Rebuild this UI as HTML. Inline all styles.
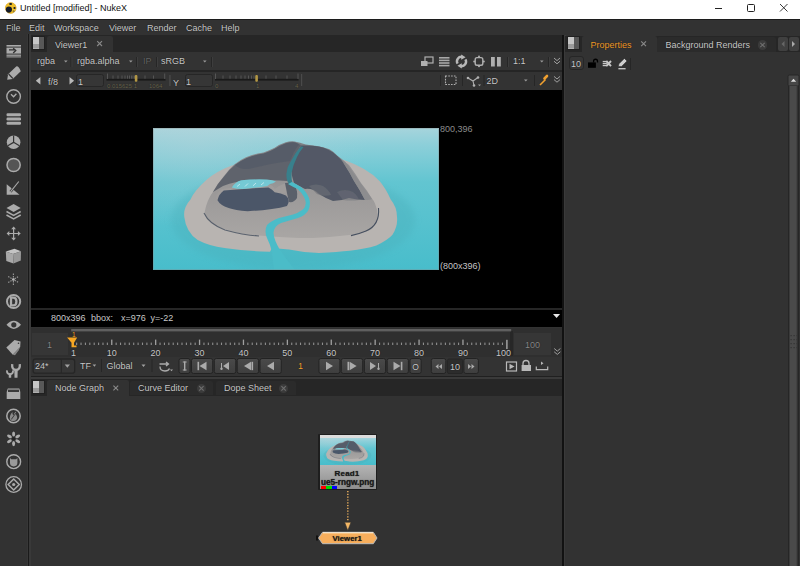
<!DOCTYPE html>
<html><head><meta charset="utf-8">
<style>
*{box-sizing:border-box;margin:0;padding:0}
html,body{width:800px;height:566px;overflow:hidden;background:#323232;font-family:"Liberation Sans",sans-serif;font-size:9px;color:#c8c8c8}
.a{position:absolute}
.t{position:absolute;white-space:pre;line-height:1;text-shadow:0 0 1px rgba(0,0,0,.7)}
svg{position:absolute;overflow:visible}
</style></head><body>
<!-- title bar -->
<div class="a" style="left:0;top:0;width:800px;height:19px;background:#fff"></div>
<div class="a" style="left:0;top:19px;width:800px;height:1px;background:#1c1c1c"></div>
<svg style="left:0;top:0" width="20" height="18" viewBox="0 0 20 18">
<circle cx="10.75" cy="8" r="5.4" fill="#f0c02a" stroke="#d9a018" stroke-width=".6"/>
<circle cx="8.9" cy="9.6" r="3.1" fill="#141a28"/>
<ellipse cx="10.6" cy="4" rx="1.5" ry="1.1" fill="#141a28"/>
<circle cx="14.5" cy="8" r="1.1" fill="#141a28"/>
<circle cx="13.6" cy="11.2" r="1" fill="#8a7a40"/>
</svg>
<div class="t" style="left:20px;top:4px;color:#111;text-shadow:none">Untitled [modified] - NukeX</div>
<div class="a" style="left:715px;top:7.6px;width:7.3px;height:1px;background:#222"></div>
<div class="a" style="left:747px;top:4px;width:8px;height:8px;border:1px solid #222;border-radius:1.5px"></div>
<svg style="left:780px;top:4.4px" width="8" height="8" viewBox="0 0 8 8"><path d="M0 0L7.5 7.5M7.5 0L0 7.5" stroke="#222" stroke-width=".9"/></svg>

<!-- menu -->
<div class="t" style="left:6px;top:24px">File</div>
<div class="t" style="left:29px;top:24px">Edit</div>
<div class="t" style="left:54px;top:24px">Workspace</div>
<div class="t" style="left:109px;top:24px">Viewer</div>
<div class="t" style="left:147px;top:24px">Render</div>
<div class="t" style="left:186px;top:24px">Cache</div>
<div class="t" style="left:221px;top:24px">Help</div>


<!-- left toolbar icons -->
<svg style="left:0;top:0" width="28" height="566" viewBox="0 0 28 566">
<g fill="#ababab" stroke="none">
 <!-- 1 exit -->
 <rect x="6.5" y="45" width="14.5" height="1.6"/>
 <rect x="6.5" y="47.6" width="14.5" height="6"/>
 <path d="M9 49.8h6.5M13.2 48.2l2.6 2.4-2.6 2.4" stroke="#333" stroke-width="1.3" fill="none"/>
 <rect x="6.5" y="54.6" width="14.5" height="1.2"/>
 <rect x="6.5" y="56.4" width="14.5" height="1"/>
 <!-- 2 pencil -->
 <path d="M7.2 79.7 L8.1 74.2 L16.2 66.4 Q18.5 65.5 20.8 71.2 L12.7 79 Z"/>
 <path d="M8.6 74 L12.9 78.5" stroke="#333" stroke-width="1.1"/>
 <!-- 3 clock -->
 <circle cx="13.6" cy="96.5" r="6.8" fill="none" stroke="#ababab" stroke-width="1.4"/>
 <path d="M11 94.2 L13.6 96.8 L16.4 93.8" fill="none" stroke="#ababab" stroke-width="1.3"/>
 <!-- 4 lines -->
 <rect x="6.5" y="113.3" width="14.5" height="3" rx="1.2"/>
 <rect x="6.5" y="117.5" width="14.5" height="3" rx="1.2"/>
 <rect x="6.5" y="121.8" width="14.5" height="3" rx="1.2"/>
 <!-- 5 pie -->
 <circle cx="13.6" cy="142.3" r="6.8"/>
 <path d="M13.6 135.5 V142.3 L7.8 145.8 M13.6 142.3 L19.4 145.8" stroke="#333" stroke-width="1.2" fill="none"/>
 <!-- 6 circle -->
 <circle cx="13.6" cy="165" r="6.6" fill="#555" stroke="#ababab" stroke-width="1.5"/>
 <!-- 7 triangle+dropper -->
 <path d="M6.7 184.3 V194.7 H19.5 Z"/>
 <path d="M10.5 191.8 L18.8 181.5" stroke="#333" stroke-width="2.6"/>
 <path d="M10.5 191.8 L18.8 181.5" stroke="#ababab" stroke-width="1.1"/>
 <!-- 8 layers -->
 <path d="M6.5 208 L13.6 204 L20.7 208 L13.6 212 Z"/>
 <path d="M6.5 211.5 L13.6 215.5 L20.7 211.5" fill="none" stroke="#ababab" stroke-width="1.5"/>
 <path d="M6.5 215 L13.6 219 L20.7 215" fill="none" stroke="#ababab" stroke-width="1.5"/>
 <!-- 9 move -->
 <path d="M13.6 227 V240 M7 233.5 H20.2" stroke="#ababab" stroke-width="1.2"/>
 <path d="M11.2 229.2 L13.6 226.5 L16 229.2 Z M11.2 237.8 L13.6 240.5 L16 237.8 Z M9.3 231.1 L6.6 233.5 L9.3 235.9 Z M17.9 231.1 L20.6 233.5 L17.9 235.9Z"/>
 <!-- 10 cube -->
 <path d="M5.8 251.5 L14.5 248.8 L21 251.2 L13 254 Z" fill="#c4c4c4"/>
 <path d="M5.8 251.5 L13 254 L13.5 263.4 L6.3 261 Z" fill="#a8a8a8"/>
 <path d="M13 254 L21 251.2 L20.8 260.5 L13.5 263.4 Z" fill="#999"/>
 <!-- 11 asterisk -->
 <g stroke="#9a9a9a" stroke-width="1.1" stroke-dasharray="1.4 1.1">
 <path d="M13.4 273.5 V285.5 M8.2 276.5 L18.6 282.5 M8.2 282.5 L18.6 276.5"/></g>
 <circle cx="13.4" cy="279.5" r="1.3" fill="#bbb"/>
 <!-- 12 D circle -->
 <circle cx="13.6" cy="301.5" r="6.6" fill="#333" stroke="#ababab" stroke-width="2"/>
 <path d="M11 297.6 H13.4 C17.4 297.6 17.4 305.4 13.4 305.4 H11 Z" fill="none" stroke="#ababab" stroke-width="2.3"/>
 <!-- 13 eye -->
 <path d="M6.5 324.8 Q13.8 316.5 21 324.8 Q13.8 333 6.5 324.8 Z"/>
 <circle cx="13.8" cy="324.8" r="2.6" fill="#333"/>
 <!-- 14 tag -->
 <path d="M6.3 347.5 L14.5 340 L20.5 341.5 L20.2 347 L12.8 354.8 Z"/>
 <path d="M12.8 354.8 L20.2 347 L18.6 350.5 L15 355.2 Z" fill="#888"/>
 <circle cx="18.5" cy="343.3" r=".8" fill="#333"/>
 <!-- 15 wrenches -->
 <path d="M12.2 364.2 Q11.6 369.6 16 370 Q20.4 369.6 19.8 364.2" fill="none" stroke="#ababab" stroke-width="2.3"/>
 <path d="M14.3 369.5 H17.7 L17.5 377.7 H14.5 Z"/>
 <path d="M7 370.3 Q6.6 374 10 374.3 Q13.4 374 13 370.3" fill="none" stroke="#ababab" stroke-width="1.9"/>
 <path d="M8.7 373.6 H11.3 L11.2 377.7 H8.8 Z"/>
 <!-- 16 box -->
 <path d="M7.8 388.5 H19.3 L20.3 392 V399 H6.7 V392 Z" fill="#ababab"/>
 <rect x="8" y="389.6" width="11" height="2.4" fill="#3a3a3a"/>
 <!-- 17 fire circle -->
 <circle cx="13.5" cy="416" r="6.7" fill="#333" stroke="#ababab" stroke-width="1.5"/>
 <path d="M10 420 Q9 415.5 12.5 412 Q12 415 13.5 415.5 Q14 412.5 16.2 411.5 Q15 414 16.8 416 Q18 418.5 15.5 420.5 Q12 422 10 420 Z" fill="#8a8a8a"/>
 <path d="M11.2 419.5 L15.8 413.2" stroke="#333" stroke-width=".9"/>
 <!-- 18 flower -->
 <g transform="translate(13.6 438.8)">
 <g fill="#ababab">
 <ellipse cx="0" cy="-4.8" rx="1.5" ry="2.6"/>
 <ellipse cx="0" cy="-4.8" rx="1.5" ry="2.6" transform="rotate(60)"/>
 <ellipse cx="0" cy="-4.8" rx="1.5" ry="2.6" transform="rotate(120)"/>
 <ellipse cx="0" cy="-4.8" rx="1.5" ry="2.6" transform="rotate(180)"/>
 <ellipse cx="0" cy="-4.8" rx="1.5" ry="2.6" transform="rotate(240)"/>
 <ellipse cx="0" cy="-4.8" rx="1.5" ry="2.6" transform="rotate(300)"/>
 </g><circle r="1.5" fill="#222"/></g>
 <!-- 19 mask circle -->
 <circle cx="13.7" cy="461.7" r="6.9" fill="#333" stroke="#ababab" stroke-width="1.4"/>
 <path d="M10 458 L11.3 459.2 H16.1 L17.4 458 V463 Q17.4 466 13.7 466.5 Q10 466 10 463 Z" fill="#9a9a9a"/>
 <!-- 20 crosshair -->
 <circle cx="13.7" cy="484.5" r="7.8" fill="none" stroke="#ababab" stroke-width="1.3"/>
 <path d="M13.7 479 L19.2 484.5 L13.7 490 L8.2 484.5 Z" fill="none" stroke="#ababab" stroke-width="1.5"/>
 <circle cx="13.7" cy="484.5" r="1.6"/>
</g>
</svg>

<!-- vertical separators -->
<div class="a" style="left:27px;top:34px;width:1px;height:532px;background:#373737"></div><div class="a" style="left:28px;top:34px;width:1px;height:532px;background:#1a1a1a"></div><div class="a" style="left:29px;top:34px;width:2px;height:532px;background:#393939"></div>
<div class="a" style="left:562px;top:35px;width:1.5px;height:531px;background:#121212"></div><div class="a" style="left:563.5px;top:35px;width:2.5px;height:531px;background:#3a3a3a"></div>

<!-- ============ VIEWER PANE ============ -->
<div class="a" style="left:31px;top:35.2px;width:531px;height:16.6px;background:#262626"></div>
<div class="a" style="left:31.9px;top:36px;width:13.2px;height:13.6px;background:#202020"></div><div class="a" style="left:32.9px;top:37px;width:6.3px;height:7px;background:#c6c6c6"></div><div class="a" style="left:32.9px;top:44px;width:6.3px;height:3.5px;background:#9c9c9c"></div><div class="a" style="left:32.9px;top:47.5px;width:6.3px;height:1.1px;background:#b0b0b0"></div><div class="a" style="left:39.199999999999996px;top:37px;width:4.9px;height:11.6px;background:#585858"></div>
<div class="a" style="left:47px;top:35.9px;width:66px;height:16px;background:#323232;border-radius:2px 2px 0 0"></div>
<div class="t" style="left:55px;top:41px">Viewer1</div>
<svg style="left:0;top:0" width="800" height="566"><path d="M97.20 41.20L102.00 46.00M102.00 41.20L97.20 46.00" stroke="#8a8a8a" stroke-width="1.1"/></svg>

<!-- row1 -->
<div class="a" style="left:31px;top:51.8px;width:531px;height:18.2px;background:#333"></div>
<div class="a" style="left:31px;top:70px;width:531px;height:1.8px;background:#252525"></div>
<div class="t" style="left:37px;top:57.4px">rgba</div>
<div class="t" style="left:77px;top:57.4px">rgba.alpha</div>
<div class="t" style="left:143px;top:57.4px;color:#656565">IP</div>
<div class="t" style="left:161px;top:57.4px">sRGB</div>
<div class="t" style="left:513px;top:57.4px">1:1</div>

<!-- row2 -->
<div class="a" style="left:31px;top:71.8px;width:531px;height:18.2px;background:#333"></div>
<div class="t" style="left:48px;top:78px">f/8</div>
<div class="a" style="left:76px;top:73.6px;width:28.2px;height:13.7px;background:#363636;border:1.3px solid #262626;border-radius:2.5px"></div>
<div class="t" style="left:78px;top:78px">1</div>
<div class="t" style="left:173px;top:79px">Y</div>
<div class="a" style="left:184.5px;top:73.8px;width:28.2px;height:13.5px;background:#363636;border:1.3px solid #262626;border-radius:2.5px"></div>
<div class="t" style="left:186px;top:78px">1</div>
<div class="t" style="left:486.5px;top:76.8px">2D</div>


<!-- row1 widgets -->
<svg style="left:0;top:0" width="800" height="100" viewBox="0 0 800 100">
 <g fill="#9a9a9a">
  <path d="M64 60.6h3.6l-1.8 2z"/>
  <path d="M129 60.6h3.6l-1.8 2z"/>
  <path d="M203 60.6h3.6l-1.8 2z"/>
  <path d="M540 60.6h3.6l-1.8 2z"/>
 </g>
 <g fill="#262626">
  <rect x="70.5" y="57" width="1" height="10"/><rect x="136" y="57" width="1" height="10"/>
  <rect x="156" y="57" width="1" height="10"/><rect x="211" y="57" width="1" height="10"/>
  <rect x="507" y="57" width="1" height="10"/><rect x="548" y="57" width="1" height="10"/>
 </g>
 <g fill="#3d3d3d">
  <rect x="71.5" y="57" width="1" height="10"/><rect x="137" y="57" width="1" height="10"/>
  <rect x="157" y="57" width="1" height="10"/><rect x="212" y="57" width="1" height="10"/>
  <rect x="508" y="57" width="1" height="10"/><rect x="549" y="57" width="1" height="10"/>
 </g>
 <!-- window icon -->
 <rect x="425" y="57" width="8" height="6" fill="none" stroke="#b0b0b0" stroke-width="1.2"/>
 <rect x="421" y="61" width="6.5" height="5" fill="#b0b0b0"/>
 <!-- lines -->
 <g fill="#a8a8a8"><rect x="439" y="57" width="10.5" height="1.6"/><rect x="439" y="59.6" width="10.5" height="1.6"/><rect x="439" y="62.2" width="10.5" height="1.6"/><rect x="439" y="64.8" width="10.5" height="1.6"/></g>
 <!-- refresh -->
 <path d="M457.6 63.6 A4.5 4.5 0 0 1 462.4 56.9" fill="none" stroke="#b8b8b8" stroke-width="2.4"/>
 <path d="M465.4 59.4 A4.5 4.5 0 0 1 460.6 66.1" fill="none" stroke="#b8b8b8" stroke-width="2.4"/>
 <path d="M461.2 54.6 L465.6 57.2 L461.2 59.8 Z M461.8 63.2 L457.4 65.8 L461.8 68.4Z" fill="#b8b8b8"/>
 <!-- crosshair square -->
 <rect x="475.2" y="57.6" width="7.6" height="7.6" rx="1.8" fill="none" stroke="#b0b0b0" stroke-width="1.4"/>
 <circle cx="479" cy="56.6" r="1" fill="#b0b0b0"/><circle cx="479" cy="66.2" r="1" fill="#b0b0b0"/>
 <circle cx="474.2" cy="61.4" r="1" fill="#b0b0b0"/><circle cx="483.8" cy="61.4" r="1" fill="#b0b0b0"/>
 <!-- pause -->
 <rect x="491" y="57" width="3.8" height="9.5" fill="#b0b0b0"/><rect x="497" y="57" width="3.8" height="9.5" fill="#b0b0b0"/>
 <!-- chevrons -->
 <path d="M554 58l3 2.6 3-2.6M554 61.2l3 2.6 3-2.6" fill="none" stroke="#a0a0a0" stroke-width="1"/>
 <path d="M554 76.4l3 2.6 3-2.6M554 79.6l3 2.6 3-2.6" fill="none" stroke="#a0a0a0" stroke-width="1"/>

 <!-- row2 -->
 <path d="M40.4 77 V84.6 L35.8 80.8 Z M69.5 77 V84.6 L74.1 80.8 Z" fill="#b8b8b8"/>
 <!-- slider 1 -->
 <rect x="106.5" y="78.8" width="59" height="1.8" fill="#1a1a1a"/>
 <g fill="#555"><rect x="107.0" y="73.5" width="1" height="5.5"/><rect x="112.5" y="75.5" width="1" height="3.2"/><rect x="117.5" y="75.5" width="1" height="3.2"/><rect x="121.5" y="75.5" width="1" height="3.2"/><rect x="124.5" y="75.5" width="1" height="3.2"/><rect x="127.0" y="75.5" width="1" height="3.2"/><rect x="129.0" y="75.5" width="1" height="3.2"/><rect x="131.0" y="75.5" width="1" height="3.2"/><rect x="132.5" y="75.5" width="1" height="3.2"/><rect x="134.0" y="75.5" width="1" height="3.2"/><rect x="135.5" y="75.5" width="1" height="3.2"/><rect x="144.5" y="75.5" width="1" height="3.2"/><rect x="153.0" y="75.5" width="1" height="3.2"/><rect x="164.2" y="73.5" width="1" height="5.5"/></g>
 <rect x="134.8" y="75" width="2.6" height="6.8" rx="1" fill="#b39744"/>
 <rect x="169.3" y="75" width="1.3" height="11" fill="#4a4a4a"/>
 <!-- slider 2 -->
 <rect x="215" y="78.8" width="83.5" height="1.8" fill="#1a1a1a"/>
 <g fill="#555"><rect x="215.0" y="73.5" width="1" height="5.5"/><rect x="222.5" y="75.5" width="1" height="3.2"/><rect x="229.5" y="75.5" width="1" height="3.2"/><rect x="235.5" y="75.5" width="1" height="3.2"/><rect x="240.5" y="75.5" width="1" height="3.2"/><rect x="244.5" y="75.5" width="1" height="3.2"/><rect x="248.0" y="75.5" width="1" height="3.2"/><rect x="251.0" y="75.5" width="1" height="3.2"/><rect x="253.5" y="75.5" width="1" height="3.2"/><rect x="256.0" y="75.5" width="1" height="3.2"/><rect x="265.5" y="75.5" width="1" height="3.2"/><rect x="275.5" y="75.5" width="1" height="3.2"/><rect x="286.5" y="75.5" width="1" height="3.2"/><rect x="297.5" y="73.5" width="1" height="5.5"/></g>
 <rect x="301" y="74" width="1.2" height="12" fill="#4a4a4a"/>
 <rect x="255.3" y="75" width="2.6" height="6.8" rx="1" fill="#b39744"/>
 <!-- right row2 -->
 <g fill="#262626"><rect x="440" y="75" width="1" height="11"/><rect x="462" y="75" width="1" height="11"/><rect x="483.5" y="75" width="1" height="11"/><rect x="534" y="75" width="1" height="11"/></g>
 <rect x="445.5" y="76" width="10.5" height="8.5" fill="none" stroke="#b0b0b0" stroke-width="1.1" stroke-dasharray="1.6 1.2"/>
 <path d="M468 78 L473 81 L478 77.5 M473 81 L474 85.5" stroke="#b0b0b0" stroke-width="1.1" fill="none"/>
 <circle cx="468" cy="78" r="1.3" fill="#b0b0b0"/><circle cx="478" cy="77.5" r="1.3" fill="#b0b0b0"/><circle cx="474" cy="85.5" r="1.3" fill="#b0b0b0"/>
 <path d="M478 84.5h3l-1.5 1.7z" fill="#9a9a9a"/>
 <path d="M524 79.6h3.6l-1.8 2z" fill="#9a9a9a"/>
 <path d="M540 85 L545.5 79.5" stroke="#f0a030" stroke-width="1.6"/><path d="M544.5 78.5 L547 76" stroke="#f0a030" stroke-width="2.6" stroke-linecap="round"/>
</g>
</svg>


<div class="t" style="left:107px;top:82.5px;font-size:6px;color:#6a6550">0.015625 1</div>
<div class="t" style="left:149px;top:82.5px;font-size:6px;color:#6a6550">1064</div>
<div class="t" style="left:215px;top:82.5px;font-size:6px;color:#6a6550">0</div>
<div class="t" style="left:256px;top:82.5px;font-size:6px;color:#6a6550">1</div>
<div class="t" style="left:295px;top:82.5px;font-size:6px;color:#6a6550">4</div>

<!-- viewer black -->
<div class="a" style="left:31px;top:90px;width:531px;height:218px;background:#000"></div>
<div class="a" style="left:31px;top:307.7px;width:531px;height:2.2px;background:#262626"></div>
<div class="a" style="left:31px;top:309.9px;width:531px;height:17.6px;background:#000"></div>
<div class="t" style="left:51px;top:314.2px">800x396</div><div class="t" style="left:91px;top:314.2px">bbox:</div><div class="t" style="left:121px;top:314.2px">x=976</div><div class="t" style="left:150.5px;top:314.2px">y=-22</div>

<svg style="left:552.8px;top:313.9px" width="8" height="5" viewBox="0 0 8 5"><path d="M0 0H7.1L3.55 4.1Z" fill="#e8e8e8"/></svg>
<!-- image -->
<svg style="left:153px;top:128px;overflow:hidden" width="286" height="142" viewBox="0 0 286 142">
<defs>
 <linearGradient id="wat" x1="0" y1="0" x2="0" y2="1">
  <stop offset="0" stop-color="#a6d4dc"/><stop offset=".12" stop-color="#8ccfd9"/><stop offset=".38" stop-color="#62c5d1"/><stop offset="1" stop-color="#48bdcb"/>
 </linearGradient>
 <radialGradient id="wat2" cx=".15" cy=".1" r=".6">
  <stop offset="0" stop-color="#b8d4da" stop-opacity=".45"/><stop offset="1" stop-color="#b8d4da" stop-opacity="0"/>
 </radialGradient>
 <linearGradient id="rock" x1="0" y1="0" x2="0" y2="1">
  <stop offset="0" stop-color="#7d7e83"/><stop offset=".5" stop-color="#9a9898"/><stop offset="1" stop-color="#a9a6a4"/>
 </linearGradient>
 <filter id="bl" x="-10%" y="-10%" width="120%" height="120%"><feGaussianBlur stdDeviation=".6"/></filter>
 <filter id="bl2" x="-20%" y="-20%" width="140%" height="140%"><feGaussianBlur stdDeviation="3"/></filter>
</defs>
<rect width="286" height="142" fill="url(#wat)"/>
<rect width="286" height="142" fill="url(#wat2)"/>
<ellipse cx="140" cy="92" rx="122" ry="50" fill="#4aaeb9" opacity=".35" filter="url(#bl2)"/>
<g filter="url(#bl)">
<!-- beach -->
<path d="M78.6 37.5 Q62 44 53.6 51.8 Q41 63 37.5 71.5 Q30 80 31.3 88.9 Q33 104 44.7 112 Q56 118 71.5 120 Q95 123.5 117 123.7 L119 120 L136 121.5 Q150 124.5 166 125 Q185 124 196.6 122.8 Q212 121 223.4 117.5 Q235 112 239.5 106.8 Q245 98 244 89 Q244 79 237.7 71.5 Q233 61 227 53.6 Q220 46 211 41 Q200 35 191 32 L150 28 Z" fill="#b8b4b1"/>
<!-- rocky mountain base -->
<path d="M51.8 83.3 Q54 72 59.7 64.2 Q65 55 70.8 48.3 Q76 41 81.2 36.4 Q87 32 93 29.3 Q102 25.5 110.6 24.5 Q116 22.5 121.7 19.7 Q127 16 132.9 14.2 Q137 13 141.5 13.4 Q147 14.5 152.7 16.5 Q158 17 163.8 18.1 Q170 19 176.5 21.3 Q181 24 184.5 27.7 Q189 31 192.4 34 Q197 40 200.4 45.2 Q205 51 208.3 56.3 Q213 63 217.9 69 Q221 73 222 75.4 Q225 82 225 89.9 Q223 97 218 101.8 Q210 105 201.4 106.5 Q180 109 160 110 Q130 110 94.5 106.5 Q85 105 82.6 104 Q70 101 61 97 Q54 92 51.8 87.5 Z" fill="url(#rock)"/>
<!-- beach inner shadow lines -->
<path d="M51 85 Q56 96 72 102 Q90 107 106 108" fill="none" stroke="#4a5362" stroke-width="1.1" opacity=".85"/>
<path d="M225.5 80 Q227 97 213 103 Q206 106 198 107.6" fill="none" stroke="#3a4557" stroke-width="1.1" opacity=".9"/>
<!-- left upper wall (medium gray) -->
<path d="M60 64 Q65 55 71 48.5 Q76 41.5 82 37 Q88 32.5 94 30 Q103 26.5 111 25.5 Q117 23.5 122 20.7 Q128 17 133 15.2 Q138 14 142 14.4 L148 17 Q142 26 138 36 Q135 45 134.5 53 Q120 52 100 52 Q82 53 70 58 Z" fill="#5f636c"/>
<path d="M82 37 Q88 32.5 94 30 Q103 26.5 111 25.5 Q117 23.5 122 20.7 Q128 17 133 15.2 Q138 14 142 14.4 L146 16 Q140 24 137 33 Q120 35 100 40 Q88 43 82 37Z" fill="#545a66" opacity=".8"/>
<!-- crater rim -->
<path d="M62.5 70.5 Q64 64 69.3 61 Q90 57.5 115.4 56.3 Q120 57 121.7 61 Q128 56 134.4 54.7 Q140 58 142 64 Z" fill="#9f9c9b"/>
<!-- crater interior -->
<path d="M64.5 72.2 Q66 66 70.8 62.6 Q92 60.5 115.4 59.5 Q119 61 121.7 64.2 Q128 65 132.9 67.4 Q138 72 134 78 Q120 82 94.7 83.3 Q82 82.5 75.6 80.1 Q67 77 64.5 72.2 Z" fill="#4b5668"/>
<!-- lake -->
<path d="M78.8 59.5 Q82 54 88.3 52.3 Q100 51 113.8 51.5 Q120 52 123 53.5 Q120 55.5 117 56 Q115 57.5 114.4 57.9 Q100 60 90 61 Q83 61 78.8 59.5 Z" fill="#74c9d4"/>
<path d="M84 58.5 L87 56 M92 58.5 L95 55.5 M100 57.8 L103 55 M108 57 L111 54.5 " stroke="#eaf7f9" stroke-width=".9" opacity=".7"/>
<!-- right dark mass -->
<path d="M148 17.5 Q158 17 166 18.6 Q176 21 182 26 Q188 31 190.5 35 Q197 45 201 53 Q207 62 212 72 Q204 72 196 70 Q188 73 180 73 Q172 70 166 66 Q160 60 152 61 Q146 58 141 55 Q138 47 138 38 Q142 27 148 17.5 Z" fill="#525966"/>
<path d="M156 58 Q163 55 170 58 Q176 62 178 67 Q170 69 164 66 Q160 62 156 58Z" fill="#6e7077" opacity=".6"/>
<path d="M184 64 Q192 60 200 64 Q205 68 206 72 Q198 73 190 72 Z" fill="#6e7077" opacity=".5"/>
<!-- right wall lighter rim -->
<path d="M190.5 35 Q197 45 201 53 Q207 62 212 72 Q218 72 219 71 Q214 62 208 55 Q202 45 196 37 Q193 34 190.5 35Z" fill="#8a898c" opacity=".8"/>
<!-- crater right chunk -->
<path d="M132 55 Q138 54 141 56 Q145 62 144 70 Q141 75 136 74 Q134 66 132 55Z" fill="#5a606b"/>
<!-- upper channel (shadowed) -->
<path d="M148 18.5 Q143 24 141 28 Q136 36 134.5 40 Q133 46 133.6 50 Q134 54 137 57 L140 58 Q138 51 138.5 45 Q140 37 144 29 Q147 23 150.5 19 Z" fill="#37808c"/>
<!-- river -->
<path d="M135 56 Q140 59 144.7 61 Q149 65 151 69 Q153 73 152.7 75.4 Q152 80 149.5 81.7 Q145 85 140 86.5 Q133 88 126 90 Q118 93 114 97 Q111 103 114 110 Q117 116 119 124 L121 142 L142 142 Q132 130 127 122 Q121 112 120.5 105 Q121 98 128 95 Q138 92 145 90 Q153 87 155.5 82 Q158 76 156 70 Q153 63 148 59 Q143 56 139 54 Z" fill="#4cbcc8"/>
</g>
<rect x=".5" y=".5" width="285" height="141" fill="none" stroke="#8a8a8a" stroke-width="1" stroke-dasharray="1 1" opacity=".7"/>
</svg>
<div class="t" style="left:440px;top:124.5px;font-size:9px;color:#8c8c8c">800,396</div>
<div class="t" style="left:440px;top:261.5px;font-size:9px;color:#c4c4c4">(800x396)</div>

<!-- timeline -->
<div class="a" style="left:31px;top:327.5px;width:531px;height:29px;background:#2f2f2f"></div><div class="a" style="left:510.3px;top:331px;width:2.7px;height:24.5px;background:#272727"></div><div class="a" style="left:31px;top:356.5px;width:531px;height:20px;background:#333"></div>
<div class="a" style="left:31.5px;top:332.6px;width:36.8px;height:22.4px;background:#363636"></div>
<div class="t" style="left:47px;top:341px;color:#888">1</div>
<div class="a" style="left:514.2px;top:332.6px;width:36.5px;height:22.4px;background:#363636"></div>
<div class="t" style="left:525px;top:341px;color:#888">100</div>
<svg style="left:0;top:0" width="800" height="400" viewBox="0 0 800 400">
<defs><linearGradient id="bg" x1="0" y1="0" x2="0" y2="1"><stop offset="0" stop-color="#4a4a4a"/><stop offset="1" stop-color="#3e3e3e"/></linearGradient></defs>
<rect x="71.2" y="329" width="440" height="2.4" fill="#606060"/>
<g fill="#8f8f8f"><rect x="76.09" y="342.6" width="1.1" height="2.4"/><rect x="80.48" y="342.6" width="1.1" height="2.4"/><rect x="84.87" y="342.6" width="1.1" height="2.4"/><rect x="89.26" y="342.6" width="1.1" height="2.4"/><rect x="93.65" y="342.6" width="1.1" height="2.4"/><rect x="98.04" y="342.6" width="1.1" height="2.4"/><rect x="102.43" y="342.6" width="1.1" height="2.4"/><rect x="106.82" y="342.6" width="1.1" height="2.4"/><rect x="115.60" y="342.6" width="1.1" height="2.4"/><rect x="119.99" y="342.6" width="1.1" height="2.4"/><rect x="124.38" y="342.6" width="1.1" height="2.4"/><rect x="128.77" y="342.6" width="1.1" height="2.4"/><rect x="133.16" y="342.6" width="1.1" height="2.4"/><rect x="137.55" y="342.6" width="1.1" height="2.4"/><rect x="141.94" y="342.6" width="1.1" height="2.4"/><rect x="146.33" y="342.6" width="1.1" height="2.4"/><rect x="150.72" y="342.6" width="1.1" height="2.4"/><rect x="159.50" y="342.6" width="1.1" height="2.4"/><rect x="163.89" y="342.6" width="1.1" height="2.4"/><rect x="168.28" y="342.6" width="1.1" height="2.4"/><rect x="172.67" y="342.6" width="1.1" height="2.4"/><rect x="177.06" y="342.6" width="1.1" height="2.4"/><rect x="181.45" y="342.6" width="1.1" height="2.4"/><rect x="185.84" y="342.6" width="1.1" height="2.4"/><rect x="190.23" y="342.6" width="1.1" height="2.4"/><rect x="194.62" y="342.6" width="1.1" height="2.4"/><rect x="203.40" y="342.6" width="1.1" height="2.4"/><rect x="207.79" y="342.6" width="1.1" height="2.4"/><rect x="212.18" y="342.6" width="1.1" height="2.4"/><rect x="216.57" y="342.6" width="1.1" height="2.4"/><rect x="220.96" y="342.6" width="1.1" height="2.4"/><rect x="225.35" y="342.6" width="1.1" height="2.4"/><rect x="229.74" y="342.6" width="1.1" height="2.4"/><rect x="234.13" y="342.6" width="1.1" height="2.4"/><rect x="238.52" y="342.6" width="1.1" height="2.4"/><rect x="247.30" y="342.6" width="1.1" height="2.4"/><rect x="251.69" y="342.6" width="1.1" height="2.4"/><rect x="256.08" y="342.6" width="1.1" height="2.4"/><rect x="260.47" y="342.6" width="1.1" height="2.4"/><rect x="264.86" y="342.6" width="1.1" height="2.4"/><rect x="269.25" y="342.6" width="1.1" height="2.4"/><rect x="273.64" y="342.6" width="1.1" height="2.4"/><rect x="278.03" y="342.6" width="1.1" height="2.4"/><rect x="282.42" y="342.6" width="1.1" height="2.4"/><rect x="291.20" y="342.6" width="1.1" height="2.4"/><rect x="295.59" y="342.6" width="1.1" height="2.4"/><rect x="299.98" y="342.6" width="1.1" height="2.4"/><rect x="304.37" y="342.6" width="1.1" height="2.4"/><rect x="308.76" y="342.6" width="1.1" height="2.4"/><rect x="313.15" y="342.6" width="1.1" height="2.4"/><rect x="317.54" y="342.6" width="1.1" height="2.4"/><rect x="321.93" y="342.6" width="1.1" height="2.4"/><rect x="326.32" y="342.6" width="1.1" height="2.4"/><rect x="335.10" y="342.6" width="1.1" height="2.4"/><rect x="339.49" y="342.6" width="1.1" height="2.4"/><rect x="343.88" y="342.6" width="1.1" height="2.4"/><rect x="348.27" y="342.6" width="1.1" height="2.4"/><rect x="352.66" y="342.6" width="1.1" height="2.4"/><rect x="357.05" y="342.6" width="1.1" height="2.4"/><rect x="361.44" y="342.6" width="1.1" height="2.4"/><rect x="365.83" y="342.6" width="1.1" height="2.4"/><rect x="370.22" y="342.6" width="1.1" height="2.4"/><rect x="379.00" y="342.6" width="1.1" height="2.4"/><rect x="383.39" y="342.6" width="1.1" height="2.4"/><rect x="387.78" y="342.6" width="1.1" height="2.4"/><rect x="392.17" y="342.6" width="1.1" height="2.4"/><rect x="396.56" y="342.6" width="1.1" height="2.4"/><rect x="400.95" y="342.6" width="1.1" height="2.4"/><rect x="405.34" y="342.6" width="1.1" height="2.4"/><rect x="409.73" y="342.6" width="1.1" height="2.4"/><rect x="414.12" y="342.6" width="1.1" height="2.4"/><rect x="422.90" y="342.6" width="1.1" height="2.4"/><rect x="427.29" y="342.6" width="1.1" height="2.4"/><rect x="431.68" y="342.6" width="1.1" height="2.4"/><rect x="436.07" y="342.6" width="1.1" height="2.4"/><rect x="440.46" y="342.6" width="1.1" height="2.4"/><rect x="444.85" y="342.6" width="1.1" height="2.4"/><rect x="449.24" y="342.6" width="1.1" height="2.4"/><rect x="453.63" y="342.6" width="1.1" height="2.4"/><rect x="458.02" y="342.6" width="1.1" height="2.4"/><rect x="466.80" y="342.6" width="1.1" height="2.4"/><rect x="471.19" y="342.6" width="1.1" height="2.4"/><rect x="475.58" y="342.6" width="1.1" height="2.4"/><rect x="479.97" y="342.6" width="1.1" height="2.4"/><rect x="484.36" y="342.6" width="1.1" height="2.4"/><rect x="488.75" y="342.6" width="1.1" height="2.4"/><rect x="493.14" y="342.6" width="1.1" height="2.4"/><rect x="497.53" y="342.6" width="1.1" height="2.4"/><rect x="501.92" y="342.6" width="1.1" height="2.4"/></g><g fill="#a0a0a0"><rect x="111.11" y="339.6" width="1.3" height="5.4"/><rect x="155.01" y="339.6" width="1.3" height="5.4"/><rect x="198.91" y="339.6" width="1.3" height="5.4"/><rect x="242.81" y="339.6" width="1.3" height="5.4"/><rect x="286.71" y="339.6" width="1.3" height="5.4"/><rect x="330.61" y="339.6" width="1.3" height="5.4"/><rect x="374.51" y="339.6" width="1.3" height="5.4"/><rect x="418.41" y="339.6" width="1.3" height="5.4"/><rect x="462.31" y="339.6" width="1.3" height="5.4"/></g>
<rect x="506.2" y="339.8" width="1.4" height="9.2" fill="#aaa"/>
<!-- orange marker -->
<path d="M67.1 337.6 H77.2 L74 342.7 V345.4 H76.5 V347.3 H71.5 V342.7 Z" fill="#f5a623"/>

<path d="M554.2 348.5l3.1 2.6 3.1-2.6M554.2 351.8l3.1 2.6 3.1-2.6" fill="none" stroke="#a0a0a0" stroke-width="1"/>
<!-- playback -->
<rect x="151.5" y="359" width="1" height="13" fill="#262626"/>
<rect x="101" y="359" width="1" height="13" fill="#262626"/>
<rect x="179" y="358.5" width="11" height="15.0" rx="2" fill="url(#bg)" stroke="#232323" stroke-width="1"/>
<rect x="191.5" y="358.5" width="21.19999999999999" height="15.0" rx="2" fill="url(#bg)" stroke="#232323" stroke-width="1"/>
<rect x="214.3" y="358.5" width="21.5" height="15.0" rx="2" fill="url(#bg)" stroke="#232323" stroke-width="1"/>
<rect x="237.2" y="358.5" width="21.400000000000034" height="15.0" rx="2" fill="url(#bg)" stroke="#232323" stroke-width="1"/>
<rect x="260" y="358.5" width="21.30000000000001" height="15.0" rx="2" fill="url(#bg)" stroke="#232323" stroke-width="1"/>
<rect x="318.9" y="358.5" width="21.0" height="15.0" rx="2" fill="url(#bg)" stroke="#232323" stroke-width="1"/>
<rect x="341.3" y="358.5" width="21.399999999999977" height="15.0" rx="2" fill="url(#bg)" stroke="#232323" stroke-width="1"/>
<rect x="364.4" y="358.5" width="21.200000000000045" height="15.0" rx="2" fill="url(#bg)" stroke="#232323" stroke-width="1"/>
<rect x="387.2" y="358.5" width="21.19999999999999" height="15.0" rx="2" fill="url(#bg)" stroke="#232323" stroke-width="1"/>
<rect x="410" y="358.5" width="11.199999999999989" height="15.0" rx="2" fill="url(#bg)" stroke="#232323" stroke-width="1"/>
<rect x="431.3" y="358.5" width="14.5" height="15.0" rx="2" fill="url(#bg)" stroke="#232323" stroke-width="1"/>
<rect x="463.9" y="358.5" width="14.5" height="15.0" rx="2" fill="url(#bg)" stroke="#232323" stroke-width="1"/>
<rect x="33.1" y="359" width="41.6" height="14.2" rx="2.5" fill="#363636" stroke="#262626" stroke-width="1.3"/>
<rect x="60.8" y="359.5" width="1" height="13.5" fill="#262626"/>
<path d="M64.7 364.5h5.3l-2.65 3.2z M92.6 364.6h3.6l-1.8 2.1z M141.5 364.6h4l-2 2.3z" fill="#a0a0a0"/>
<rect x="447.5" y="359" width="15" height="14.5" rx="1.5" fill="#2c2c2c" stroke="#262626" stroke-width="1"/>
<g fill="#ababab">
 <rect x="184" y="361.5" width="1.4" height="9"/><rect x="182.8" y="361.5" width="3.8" height="1"/><rect x="182.8" y="369.5" width="3.8" height="1"/>
 <rect x="197.5" y="361.8" width="1.6" height="8.4"/><path d="M206.5 361.8 V370.2 L199.5 366Z"/>
 <path d="M229 362 V370 L223 366Z"/><rect x="221" y="363" width="1" height="5"/><circle cx="221.5" cy="368.8" r="1.2"/>
 <path d="M251 361.8 V370.2 L244 366Z"/><rect x="251.5" y="361.8" width="1.6" height="8.4"/>
 <path d="M274 361.8 V370.2 L267 366Z"/>
 <path d="M326 361.8 V370.2 L333 366Z"/>
 <rect x="347.5" y="361.8" width="1.6" height="8.4"/><path d="M349.6 361.8 V370.2 L356.6 366Z"/>
 <path d="M370 362 V370 L376 366Z"/><rect x="378" y="363" width="1" height="5"/><circle cx="378.5" cy="368.8" r="1.2"/>
 <path d="M393.5 361.8 V370.2 L400.5 366Z"/><rect x="400.8" y="361.8" width="1.6" height="8.4"/>
 
 <path d="M438.5 364 V369 L435.5 366.5Z M442 364 V369 L439 366.5Z"/>
 <path d="M468 364 V369 L471 366.5Z M471.5 364 V369 L474.5 366.5Z"/>
 <!-- loop icon -->
 <path d="M159.5 364 H168 M166 362 L168.5 364 L166 366" fill="none" stroke="#ababab" stroke-width="1.3"/>
 <path d="M160 366.5 Q160 371 165 371 Q168.5 371 169.5 368.5" fill="none" stroke="#ababab" stroke-width="1.3"/>
 <path d="M170 369.5h3l-1.5 1.7z"/>
 <!-- flipbook -->
 <rect x="506.5" y="362" width="10" height="9" fill="none" stroke="#b8b8b8" stroke-width="1.2"/>
 <path d="M509.5 363.8 V369.2 L514.5 366.5Z" fill="#b8b8b8"/>
 <path d="M523 365 V363.5 A3 3 0 0 1 529 363.5 V365" fill="none" stroke="#b8b8b8" stroke-width="1.3"/>
 <rect x="521.6" y="365" width="9.4" height="6" fill="#b8b8b8"/>
 <path d="M536.3 366.5 V369.6 H547.7 V366.5" fill="none" stroke="#b8b8b8" stroke-width="1.2"/>
 <path d="M541 361.5 V365 L543.5 363.2Z" fill="#b8b8b8"/>
</g>
</svg>
<div class="t" style="left:106.7px;top:349px;width:10px;text-align:center">10</div>
<div class="t" style="left:150.6px;top:349px;width:10px;text-align:center">20</div>
<div class="t" style="left:194.5px;top:349px;width:10px;text-align:center">30</div>
<div class="t" style="left:238.4px;top:349px;width:10px;text-align:center">40</div>
<div class="t" style="left:282.3px;top:349px;width:10px;text-align:center">50</div>
<div class="t" style="left:326.2px;top:349px;width:10px;text-align:center">60</div>
<div class="t" style="left:370.1px;top:349px;width:10px;text-align:center">70</div>
<div class="t" style="left:414.0px;top:349px;width:10px;text-align:center">80</div>
<div class="t" style="left:457.9px;top:349px;width:10px;text-align:center">90</div>
<div class="t" style="left:496px;top:349px">100</div>
<div class="t" style="left:71px;top:349px">1</div>

<div class="t" style="left:72px;top:332px;font-size:6.5px;color:#f5a623">1</div>
<div class="t" style="left:35px;top:362.3px">24*</div>
<div class="t" style="left:80px;top:362px">TF</div>
<div class="t" style="left:106.5px;top:362px">Global</div>
<div class="t" style="left:298px;top:362px;color:#f0a030">1</div>
<div class="t" style="left:450px;top:362.8px">10</div>
<div class="t" style="left:412.2px;top:363px;font-size:8.5px">O</div>
<div class="a" style="left:31px;top:375.7px;width:531px;height:1.6px;background:#202020"></div>

<!-- ============ NODE GRAPH PANE ============ -->
<div class="a" style="left:31px;top:377.3px;width:531px;height:1.3px;background:#3a3a3a"></div><div class="a" style="left:31px;top:378.6px;width:531px;height:17.4px;background:#262626"></div>
<div class="a" style="left:31px;top:396px;width:531px;height:170px;background:#323232"></div>
<div class="a" style="left:31.9px;top:380px;width:13.2px;height:13.6px;background:#202020"></div><div class="a" style="left:32.9px;top:381px;width:6.3px;height:7px;background:#c6c6c6"></div><div class="a" style="left:32.9px;top:388px;width:6.3px;height:3.5px;background:#9c9c9c"></div><div class="a" style="left:32.9px;top:391.5px;width:6.3px;height:1.1px;background:#b0b0b0"></div><div class="a" style="left:39.199999999999996px;top:381px;width:4.9px;height:11.6px;background:#585858"></div>
<div class="a" style="left:47px;top:380px;width:82px;height:16px;background:#323232;border-radius:2px 2px 0 0"></div>
<div class="t" style="left:55px;top:384.2px">Node Graph</div>
<svg style="left:0;top:0" width="800" height="566"><path d="M113.40 385.60L118.20 390.40M118.20 385.60L113.40 390.40" stroke="#8a8a8a" stroke-width="1.1"/></svg>
<div class="a" style="left:130px;top:381px;width:83px;height:14px;background:#2b2b2b;border-radius:2px 2px 0 0"></div>
<div class="t" style="left:138px;top:384.2px">Curve Editor</div>
<div class="a" style="left:196.8px;top:383.79999999999995px;width:9.2px;height:9.2px;border-radius:50%;background:#3b3b3b"></div><svg style="left:0;top:0" width="800" height="566"><path d="M199.20000000000002 386.2L203.6 390.59999999999997M203.6 386.2L199.20000000000002 390.59999999999997" stroke="#6e6e6e" stroke-width="1.1"/></svg>
<div class="a" style="left:216px;top:381px;width:80px;height:14px;background:#2b2b2b;border-radius:2px 2px 0 0"></div>
<div class="t" style="left:224px;top:384.2px">Dope Sheet</div>
<div class="a" style="left:279.0px;top:383.79999999999995px;width:9.2px;height:9.2px;border-radius:50%;background:#3b3b3b"></div><svg style="left:0;top:0" width="800" height="566"><path d="M281.40000000000003 386.2L285.8 390.59999999999997M285.8 386.2L281.40000000000003 390.59999999999997" stroke="#6e6e6e" stroke-width="1.1"/></svg>

<!-- read node -->
<div class="a" style="left:318px;top:434px;width:59px;height:55.5px;background:#1e1e1e;border-radius:1px"></div>
<div class="a" style="left:319.5px;top:435px;width:56px;height:3px;background:#dcdcdc"></div>
<div class="a" style="left:319.5px;top:438px;width:56px;height:27px;background:linear-gradient(#8ccad4,#58b6c4)"></div>
<div class="a" style="left:319.5px;top:465px;width:56px;height:24px;background:linear-gradient(#b4b4b4,#8e8e8e)"></div>
<svg style="left:319.5px;top:438px;overflow:hidden" width="56" height="27" viewBox="0 0 286 142" preserveAspectRatio="none">
<rect width="286" height="142" fill="url(#wat)"/>
<rect width="286" height="142" fill="url(#wat2)"/>
<ellipse cx="140" cy="92" rx="122" ry="50" fill="#4aaeb9" opacity=".35" />
<g >
<!-- beach -->
<path d="M78.6 37.5 Q62 44 53.6 51.8 Q41 63 37.5 71.5 Q30 80 31.3 88.9 Q33 104 44.7 112 Q56 118 71.5 120 Q95 123.5 117 123.7 L119 120 L136 121.5 Q150 124.5 166 125 Q185 124 196.6 122.8 Q212 121 223.4 117.5 Q235 112 239.5 106.8 Q245 98 244 89 Q244 79 237.7 71.5 Q233 61 227 53.6 Q220 46 211 41 Q200 35 191 32 L150 28 Z" fill="#b8b4b1"/>
<!-- rocky mountain base -->
<path d="M51.8 82.8 L56.5 66 Q62 57 68.4 49.5 Q75 41 82.6 35.3 Q88 31 94.5 28 Q104 24 113.5 23.4 Q121 20 127.8 16.3 Q134 13 139.6 12.7 Q146 13 151.5 15 Q160 16 168 17.4 Q175 19 180 23.4 Q186 28 192 35.3 Q198 42 203.8 49.5 Q210 56 215.6 63.8 Q220 70 222.8 78 Q225 84 225 89.9 Q223 97 218 101.8 Q210 105 201.4 106.5 Q180 109 160 110 Q130 110 94.5 106.5 Q85 105 82.6 104 Q70 101 61 97 Q54 92 51.8 87.5 Z" fill="url(#rock)"/>
<!-- beach inner shadow lines -->
<path d="M50.5 84 Q56 96 72 102 Q90 107 106 108" fill="none" stroke="#46505f" stroke-width="1.6"/>
<path d="M225.5 80 Q227 97 213 103 Q206 106 198 107.6" fill="none" stroke="#3a4557" stroke-width="1.4"/>
<!-- left dark upper wall -->
<path d="M66 57 Q71 48 78 41 Q86 33 96 30 Q106 27 118 25.7 Q130 18 142 15 L150 16 Q143 25 139 36 Q136 45 134 52 Q120 53 100 52.5 Q82 53 72 56 Z" fill="#565d69"/>
<!-- crater interior -->
<path d="M64 67 Q68 61 80 60.5 Q100 60 124 59 Q138 60 144 67 Q147 74 140 78 Q120 83 95 84 Q75 83 66 76 Z" fill="#4a5769"/>
<path d="M63 65.5 Q80 61.5 100 61 Q125 59.5 142 63" fill="none" stroke="#a5a2a1" stroke-width="1.8"/>
<!-- lake -->
<path d="M76 60.5 Q80 54 90 52.5 Q105 51.5 117 53 Q126 54 126 57 Q121 60 110 60.5 Q95 61.5 76 60.5 Z" fill="#78ccd6"/>
<path d="M83 58 L86 55.5 M91 57.5 L94 54.5 M99 58.5 L103 55 M107 57.5 L111 54.8 M115 57 L118 55" stroke="#eaf7f9" stroke-width=".9" opacity=".75"/>
<!-- right dark mass -->
<path d="M151.5 17.5 Q163 16.5 173 18.6 Q182 25 189.5 35 Q196 45 201 54 Q208 64 214 74 Q206 75 199 74 Q188 73 180 72 Q168 69 158.6 64 Q147 60 139.6 54 Q137 45 137 37.6 Q142 27 151.5 17.5 Z" fill="#545b68"/>
<path d="M165 66 Q180 64 192 67 Q204 72 214 74 Q206 76 196 78 Q180 78 168 72 Z" fill="#7b7c82" opacity=".7"/>
<!-- upper channel (shadowed) -->
<path d="M151.5 16.5 Q145 24 142 33 Q136 42 133.5 49.5 Q134 55 137 58.5 L140 59 Q139 52 141 44 Q146 32 153 17.5 Z" fill="#3d8693"/>
<!-- river -->
<path d="M135 58 Q142 62 146.8 63.75 Q151 68 151.5 73 Q152 80 149 82.75 Q138 87 125.4 90 Q117 93 113.5 97 Q111 103 114 110 Q117 116 119 124 L121 142 L142 142 Q132 130 127 122 Q121 112 120.5 105 Q121 98 128 95.5 Q142 91 153 86 Q158 79 156.5 70 Q154 63 148 59 Q142 56 139 54 Z" fill="#4db7c4"/>
</g>
</svg>
<div class="t" style="left:334.5px;top:470px;color:#1a1a1a;font-size:8px;font-weight:bold;letter-spacing:.2px">Read1</div>
<div class="t" style="left:321px;top:478.5px;color:#1a1a1a;font-size:8.2px;font-weight:bold">ue5-rngw.png</div>
<div class="a" style="left:321px;top:486.3px;width:5px;height:2.4px;background:#f00"></div>
<div class="a" style="left:326px;top:486.3px;width:5.5px;height:2.4px;background:#0d0"></div>
<div class="a" style="left:331.5px;top:486.3px;width:5.5px;height:2.4px;background:#00f"></div>
<svg style="left:0;top:0" width="800" height="566" viewBox="0 0 800 566">
 <line x1="347.8" y1="491" x2="347.8" y2="521" stroke="#d9a45a" stroke-width="1.6" stroke-dasharray="1.2 1.6"/>
 <path d="M344.6 522.2 H351 L347.8 530.6 Z" fill="#f3b766" stroke="#333" stroke-width=".6"/>
 <path d="M322.5 532.3 H373.3 L377 538 L373.3 543.7 H322.5 L318.6 538 Z" fill="#f7ae5c" stroke="#bbb" stroke-width="1"/>
 <path d="M323 532.8 H373" stroke="#fff3dd" stroke-width="1"/>
 <rect x="316" y="535.5" width="2" height="5" fill="#111"/>
</svg>
<div class="t" style="left:332.5px;top:535px;color:#1a1a1a;font-size:7.8px;font-weight:bold">Viewer1</div>

<!-- ============ RIGHT PANE ============ -->
<div class="a" style="left:565px;top:51.5px;width:235px;height:514.5px;background:#323232"></div>
<div class="a" style="left:565px;top:36px;width:235px;height:15.5px;background:#262626"></div>
<div class="a" style="left:566.9px;top:36.2px;width:13.2px;height:13.6px;background:#202020"></div><div class="a" style="left:567.9px;top:37.2px;width:6.3px;height:7px;background:#c6c6c6"></div><div class="a" style="left:567.9px;top:44.2px;width:6.3px;height:3.5px;background:#9c9c9c"></div><div class="a" style="left:567.9px;top:47.7px;width:6.3px;height:1.1px;background:#b0b0b0"></div><div class="a" style="left:574.1999999999999px;top:37.2px;width:4.9px;height:11.6px;background:#585858"></div>
<div class="a" style="left:582px;top:36px;width:75px;height:15.5px;background:#323232;border-radius:2px 2px 0 0"></div>
<div class="t" style="left:590.5px;top:41px;color:#ef9a2a">Properties</div>
<svg style="left:0;top:0" width="800" height="566"><path d="M641.20 41.40L646.00 46.20M646.00 41.40L641.20 46.20" stroke="#8a8a8a" stroke-width="1.1"/></svg>
<div class="a" style="left:657px;top:37px;width:119px;height:14.5px;background:#2b2b2b;border-radius:2px 2px 0 0"></div>
<div class="t" style="left:665.5px;top:41px">Background Renders</div>
<div class="a" style="left:757.9px;top:40.4px;width:9.2px;height:9.2px;border-radius:50%;background:#3b3b3b"></div><svg style="left:0;top:0" width="800" height="566"><path d="M760.3 42.8L764.7 47.2M764.7 42.8L760.3 47.2" stroke="#6e6e6e" stroke-width="1.1"/></svg>
<div class="a" style="left:778px;top:36.5px;width:9.5px;height:14.5px;background:#404040;border-radius:2px"></div>
<div class="a" style="left:788.5px;top:36.5px;width:10px;height:14.5px;background:#404040;border-radius:2px"></div>
<svg style="left:0;top:0" width="800" height="100" viewBox="0 0 800 100">
 <path d="M784.5 41 V47 L781.5 44Z" fill="#666"/>
 <path d="M792 41 V47 L795 44Z" fill="#aaa"/>
 <!-- lock black -->
 <path d="M593.6 62.6 V61.2 A1.95 1.95 0 0 1 597.5 61.2 V62.6" fill="none" stroke="#000" stroke-width="1.3"/>
 <rect x="588" y="62.4" width="7.9" height="5.4" fill="#000"/>
 <!-- ≡x -->
 <g fill="#c8c8c8"><rect x="602.7" y="60.9" width="4.2" height="1.3"/><rect x="602.7" y="62.9" width="4.2" height="1.3"/><rect x="602.7" y="64.9" width="4.2" height="1.3"/></g>
 <path d="M606.3 61 L611 66.2 M611 61 L606.3 66.2" stroke="#c8c8c8" stroke-width="1.9"/>
 <!-- pencil -->
 <path d="M618.3 66.6 L619 63.8 L624.4 58.4 L627 61 L621.6 66.4 Z" fill="#cfcfcf" stroke="#222" stroke-width=".5"/>
 <rect x="618.4" y="68" width="7.2" height="1.4" fill="#c0c0c0"/>
 <rect x="630" y="58" width="1" height="12" fill="#262626"/>
 <!-- scrollbar -->
 <rect x="788" y="75" width="11" height="11" rx="1.5" fill="#474747" stroke="#262626" stroke-width="1"/>
 <path d="M790.8 81.8 H796.2 L793.5 78.8Z" fill="#ddd"/>
</svg>
<div class="a" style="left:568.5px;top:56.3px;width:15.9px;height:14px;background:#363636;border:1.3px solid #262626;border-radius:3px"></div>
<div class="t" style="left:571px;top:60px">10</div>
<div class="a" style="left:788px;top:86px;width:11px;height:480px;background:linear-gradient(90deg,#222 0,#2a2a2a 1px,#4a4a4a 2px,#4a4a4a 8px,#2a2a2a 10px,#222 11px)"></div>
<svg style="left:789px;top:334px" width="10" height="16" viewBox="0 0 10 16"><g fill="#333">
 <rect x="1.5" y="1" width="1.2" height="1.2"/><rect x="4.5" y="1" width="1.2" height="1.2"/><rect x="7.5" y="1" width="1.2" height="1.2"/>
 <rect x="1.5" y="5" width="1.2" height="1.2"/><rect x="4.5" y="5" width="1.2" height="1.2"/><rect x="7.5" y="5" width="1.2" height="1.2"/>
 <rect x="1.5" y="9" width="1.2" height="1.2"/><rect x="4.5" y="9" width="1.2" height="1.2"/><rect x="7.5" y="9" width="1.2" height="1.2"/>
 <rect x="1.5" y="13" width="1.2" height="1.2"/><rect x="4.5" y="13" width="1.2" height="1.2"/><rect x="7.5" y="13" width="1.2" height="1.2"/>
</g></svg>

</body></html>
